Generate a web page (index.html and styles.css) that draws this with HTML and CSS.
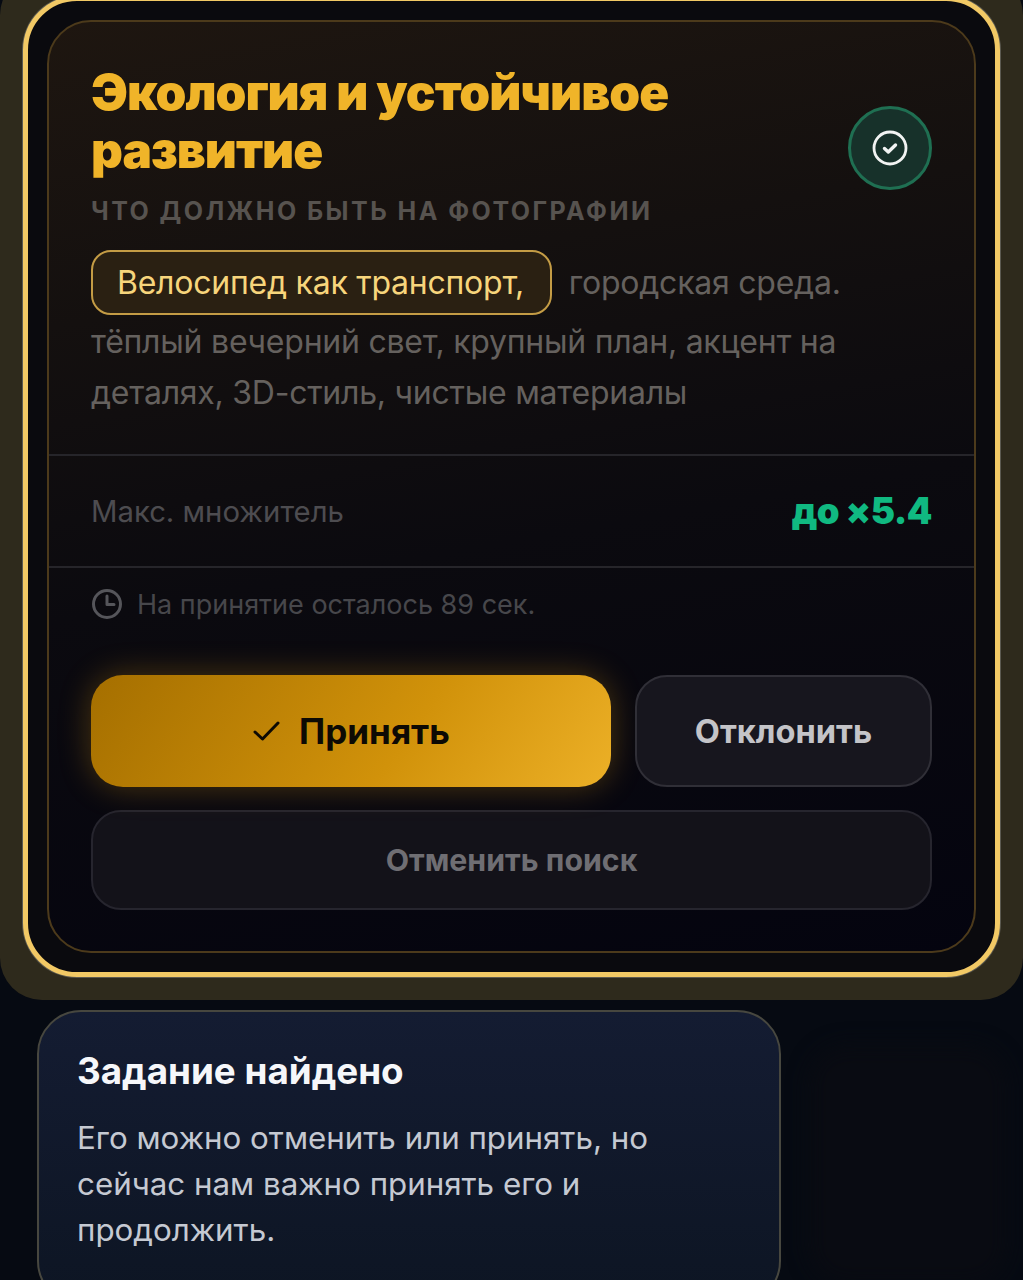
FILE: index.html
```html
<!DOCTYPE html>
<html lang="ru">
  <head>
    <meta charset="UTF-8" />
    <meta name="viewport" content="width=device-width, initial-scale=1.0" />
    <title>Задание найдено</title>
    <link rel="stylesheet" href="styles.css">
  </head>
  <body>
    <div class="task-glow">
      <div class="task-frame">
        <div class="task-card">
          <div class="task-head">
            <div class="task-heading">
              <h1 class="task-title">Экология и устойчивое развитие</h1>
            </div>
            <div class="task-badge">
              <svg width="36" height="36" viewBox="0 0 36 36" fill="none" stroke="#f1f3f2">
                <circle cx="18" cy="18" r="16" stroke-width="2.8" />
                <path d="M12.5 18.5l3.8 3.5 7.2-7" stroke-width="3.4" stroke-linecap="round" stroke-linejoin="round" />
              </svg>
            </div>
          </div>
          <div class="task-label">Что должно быть на фотографии</div>
          <p class="task-text">
            <span class="task-pill">Велосипед как транспорт,</span>
            <span class="task-first">городская среда.</span><br />
            тёплый вечерний свет, крупный план, акцент на деталях, 3D-стиль, чистые материалы
          </p>
          <div class="task-row">
            <span class="task-row-name">Макс. множитель</span>
            <span class="task-row-value">до ×5.4</span>
          </div>
          <div class="task-timer">
            <svg width="32" height="32" viewBox="0 0 32 32" fill="none" stroke="#55555a" stroke-width="3">
              <circle cx="16" cy="16" r="13.5" />
              <path d="M16 8v8.5h7" stroke-linecap="round" stroke-linejoin="round" />
            </svg>
            <span>На принятие осталось 89 сек.</span>
          </div>
          <div class="task-actions">
            <button class="btn-accept">
              <svg width="30" height="24" viewBox="0 0 30 24" fill="none" stroke="#0d0a04" stroke-width="3">
                <path d="M3 13l7.5 7L26 4" stroke-linecap="round" stroke-linejoin="round" />
              </svg>
              Принять
            </button>
            <button class="btn-reject">Отклонить</button>
          </div>
          <button class="btn-cancel">Отменить поиск</button>
        </div>
      </div>
    </div>

    <div class="hint-area">
      <div class="hint">
        <h2 class="hint-title">Задание найдено</h2>
        <p class="hint-text">Его можно отменить или принять, но сейчас нам важно принять его и продолжить.</p>
      </div>
      <div class="hint-blob"></div>
    </div>
  </body>
</html>
```

FILE: styles.css
```css
html,
body {
  margin: 0;
  height: 1280px;
  overflow: hidden;
}
body {
  background: #060a12;
  font-family: Inter, "Noto Sans", sans-serif;
}
h1,
h2,
p {
  margin: 0;
}
button {
  font-family: inherit;
  cursor: pointer;
}

.task-glow {
  margin-top: -27px;
  padding: 23px;
  border-radius: 42px;
  background: #2e2a1c;
}
.task-frame {
  padding: 19px;
  height: 933px;
  border: 5px solid #f2c965;
  border-radius: 54px;
  background: #0a0a0e;
  box-shadow: 0 0 0 1px #5c5a50;
}
.task-card {
  height: 100%;
  box-sizing: border-box;
  padding: 0 42px;
  border: 2px solid #4c3a1b;
  border-radius: 44px;
  background: linear-gradient(170deg, #1e1610 0%, #14100f 28%, #0b0a0f 55%, #04040f 100%);
}
.task-head {
  display: flex;
  justify-content: space-between;
  align-items: flex-end;
  padding-top: 41px;
}
.task-heading {
  width: 640px;
}
.task-title {
  font-size: 49.5px;
  line-height: 58px;
  font-weight: 900;
  letter-spacing: -1px;
  color: #f0b429;
}
.task-badge {
  display: flex;
  align-items: center;
  justify-content: center;
  width: 84px;
  height: 84px;
  margin-bottom: -11px;
  box-sizing: border-box;
  border: 3px solid #1f6f52;
  border-radius: 50%;
  background: #17312a;
}
.task-label {
  margin-top: 16px;
  font-size: 25px;
  line-height: 32px;
  font-weight: 700;
  letter-spacing: 2.45px;
  text-transform: uppercase;
  color: #57534f;
}
.task-text {
  height: 229px;
  margin: 0 -42px;
  padding: 30px 42px 0;
  box-sizing: border-box;
  font-size: 32px;
  letter-spacing: -0.24px;
  line-height: 51px;
  color: #65615e;
  border-bottom: 2px solid #26252a;
}
.task-pill {
  display: inline-block;
  padding: 0 26px 0 24px;
  height: 61px;
  line-height: 61px;
  border: 2px solid #c49c45;
  border-radius: 20px;
  background: #2a2012;
  color: #f7d57c;
  vertical-align: top;
  margin: -7px 8px 1px 0;
}
.task-first {
  line-height: 51px;
}
.task-row {
  display: flex;
  justify-content: space-between;
  align-items: center;
  height: 110px;
  margin: 0 -42px;
  padding: 0 42px;
  border-bottom: 2px solid #26252a;
}
.task-row-name {
  font-size: 29.3px;
  color: #4d4c50;
}
.task-row-value {
  font-size: 36.5px;
  font-weight: 900;
  letter-spacing: -0.5px;
  color: #10b981;
}
.task-timer {
  display: flex;
  align-items: center;
  gap: 14px;
  height: 72px;
  font-size: 27px;
  color: #47474b;
}
.task-actions {
  display: flex;
  gap: 24px;
  margin-top: 35px;
}
.btn-accept,
.btn-reject {
  height: 112px;
  border-radius: 32px;
  font-weight: 700;
}
.btn-accept {
  display: flex;
  align-items: center;
  justify-content: center;
  gap: 17px;
  width: 520px;
  border: none;
  background: linear-gradient(125deg, #a56f00 0%, #d1920a 60%, #ecb027 100%);
  color: #0d0a04;
  font-size: 35px;
  box-shadow: 0 0 32px rgba(217, 150, 20, 0.32);
}
.btn-reject {
  flex: 1;
  border: 2px solid #302f37;
  background: #17161e;
  color: #c4c4c8;
  font-size: 32.6px;
}
.btn-cancel {
  display: block;
  width: 100%;
  height: 100px;
  margin-top: 23px;
  border: 2px solid #26252e;
  border-radius: 30px;
  background: #131219;
  color: #6f6e73;
  font-size: 30.3px;
  font-weight: 700;
}

.hint-area {
  position: relative;
  height: 280px;
  box-sizing: border-box;
  padding: 10px 0 0 37px;
  overflow: hidden;
}
.hint {
  width: 744px;
  height: 295px;
  box-sizing: border-box;
  padding: 36px 38px;
  border: 2px solid #47473f;
  border-radius: 44px;
  background: linear-gradient(180deg, #141c32 0%, #0d1523 100%);
}
.hint-title {
  font-size: 36.8px;
  line-height: 46px;
  font-weight: 700;
  color: #f6f7fa;
}
.hint-text {
  margin-top: 21px;
  font-size: 31.3px;
  line-height: 46px;
  color: #c5c9d2;
}
.hint-blob {
  position: absolute;
  left: 808px;
  top: 45px;
  width: 200px;
  height: 240px;
  border-radius: 40px;
  background: #090b12;
  filter: blur(10px);
}
```
